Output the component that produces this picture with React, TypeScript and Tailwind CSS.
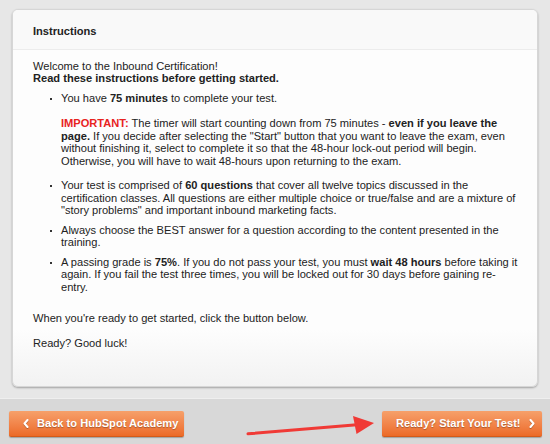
import type { ReactNode } from "react";

function Bullet({ children, className = "" }: { children: ReactNode; className?: string }) {
  return (
    <li className={`flex ${className}`}>
      <span className="w-[28px] shrink-0 flex justify-end pr-[9px] pt-[6px]">
        <span className="w-[2px] h-[2px] bg-[#333]" />
      </span>
      <div className="flex-1">{children}</div>
    </li>
  );
}

function Chevron({ dir }: { dir: "left" | "right" }) {
  return (
    <svg width="6" height="9" viewBox="0 0 6 9" className="drop-shadow-[0_1px_0_rgba(0,0,0,0.25)]">
      <path
        d={dir === "left" ? "M4.5 1 L1.5 4.5 L4.5 8" : "M1.5 1 L4.5 4.5 L1.5 8"}
        fill="none"
        stroke="white"
        strokeWidth="2"
        strokeLinecap="round"
        strokeLinejoin="round"
      />
    </svg>
  );
}

export default function App() {
  return (
    <div className="w-[550px] h-[444px] flex flex-col bg-[#e7e7e7] font-['Liberation_Sans',Arial,sans-serif] text-[11.1px] leading-[12.5px] text-[#222]">
      <div className="mx-[12px] mt-[9px] h-[378px] rounded-[6px] border border-[#d6d6d6] shadow-[0_1px_2px_rgba(0,0,0,0.3)] overflow-hidden flex flex-col bg-linear-to-b from-[#fdfdfd] from-85% to-[#f2f2f2]">
        <div className="pt-[15px] pb-[11px] px-[20px] bg-[#f9f9f9] border-b border-[#ececec] font-bold">
          Instructions
        </div>

        <div className="pl-[20px] pr-[18px] pt-[10px]">
          <p>Welcome to the Inbound Certification!</p>
          <p className="font-bold">Read these instructions before getting started.</p>

          <ul className="mt-[7px] flex flex-col gap-[7px]">
            <Bullet className="pb-[5px]">
              <p>
                You have <b>75 minutes</b> to complete your test.
              </p>
              <p className="mt-[13px]">
                <b className="text-[#e8231f]">IMPORTANT:</b> The timer will start counting down from 75
                minutes - <b>even if you leave the page.</b> If you decide after selecting the "Start" button
                that you want to leave the exam, even without finishing it, select to complete it so that the
                48-hour lock-out period will begin. Otherwise, you will have to wait 48-hours upon returning to
                the exam.
              </p>
            </Bullet>
            <Bullet>
              Your test is comprised of <b>60 questions</b> that cover all twelve topics discussed in the
              certification classes. All questions are either multiple choice or true/false and are a mixture
              of "story problems" and important inbound marketing facts.
            </Bullet>
            <Bullet>
              Always choose the BEST answer for a question according to the content presented in the training.
            </Bullet>
            <Bullet>
              A passing grade is <b>75%</b>. If you do not pass your test, you must <b>wait 48 hours</b> before
              taking it again. If you fail the test three times, you will be locked out for 30 days before
              gaining re-entry.
            </Bullet>
          </ul>

          <p className="mt-[19px]">When you're ready to get started, click the button below.</p>
          <p className="mt-[12.5px]">Ready? Good luck!</p>
        </div>
      </div>

      <div className="relative mt-[11px] flex-1 border-t border-[#efefef] bg-[#d8d8d8] flex items-start justify-between pl-[9px] pr-[8px] pt-[12px]">
        <button className="w-[175px] h-[26px] rounded-[2px] bg-linear-to-b from-[#f6a06a] to-[#ec6a26] border-b border-[#d25a1a] shadow-[0_1px_1px_rgba(0,0,0,0.25)] flex items-center pl-[14px] gap-[8px] text-white font-bold text-[11.1px] [text-shadow:0_1px_1px_rgba(0,0,0,0.3)]">
          <Chevron dir="left" />
          <span>Back to HubSpot Academy</span>
        </button>
        <button className="w-[160px] h-[26px] rounded-[2px] bg-linear-to-b from-[#f6a06a] to-[#ec6a26] border-b border-[#d25a1a] shadow-[0_1px_1px_rgba(0,0,0,0.25)] flex items-center pl-[14px] gap-[8px] text-white font-bold text-[11.1px] [text-shadow:0_1px_1px_rgba(0,0,0,0.3)]">
          <span>Ready? Start Your Test!</span>
          <Chevron dir="right" />
        </button>

        <svg className="absolute left-0 top-0 pointer-events-none" width="550" height="46" viewBox="0 0 550 46">
          <path d="M248 34.8 L357 25.8" stroke="#f03a36" strokeWidth="3" strokeLinecap="round" />
          <path d="M353 17 L374 24 L356.5 35 Z" fill="#f03a36" />
        </svg>
      </div>
    </div>
  );
}
